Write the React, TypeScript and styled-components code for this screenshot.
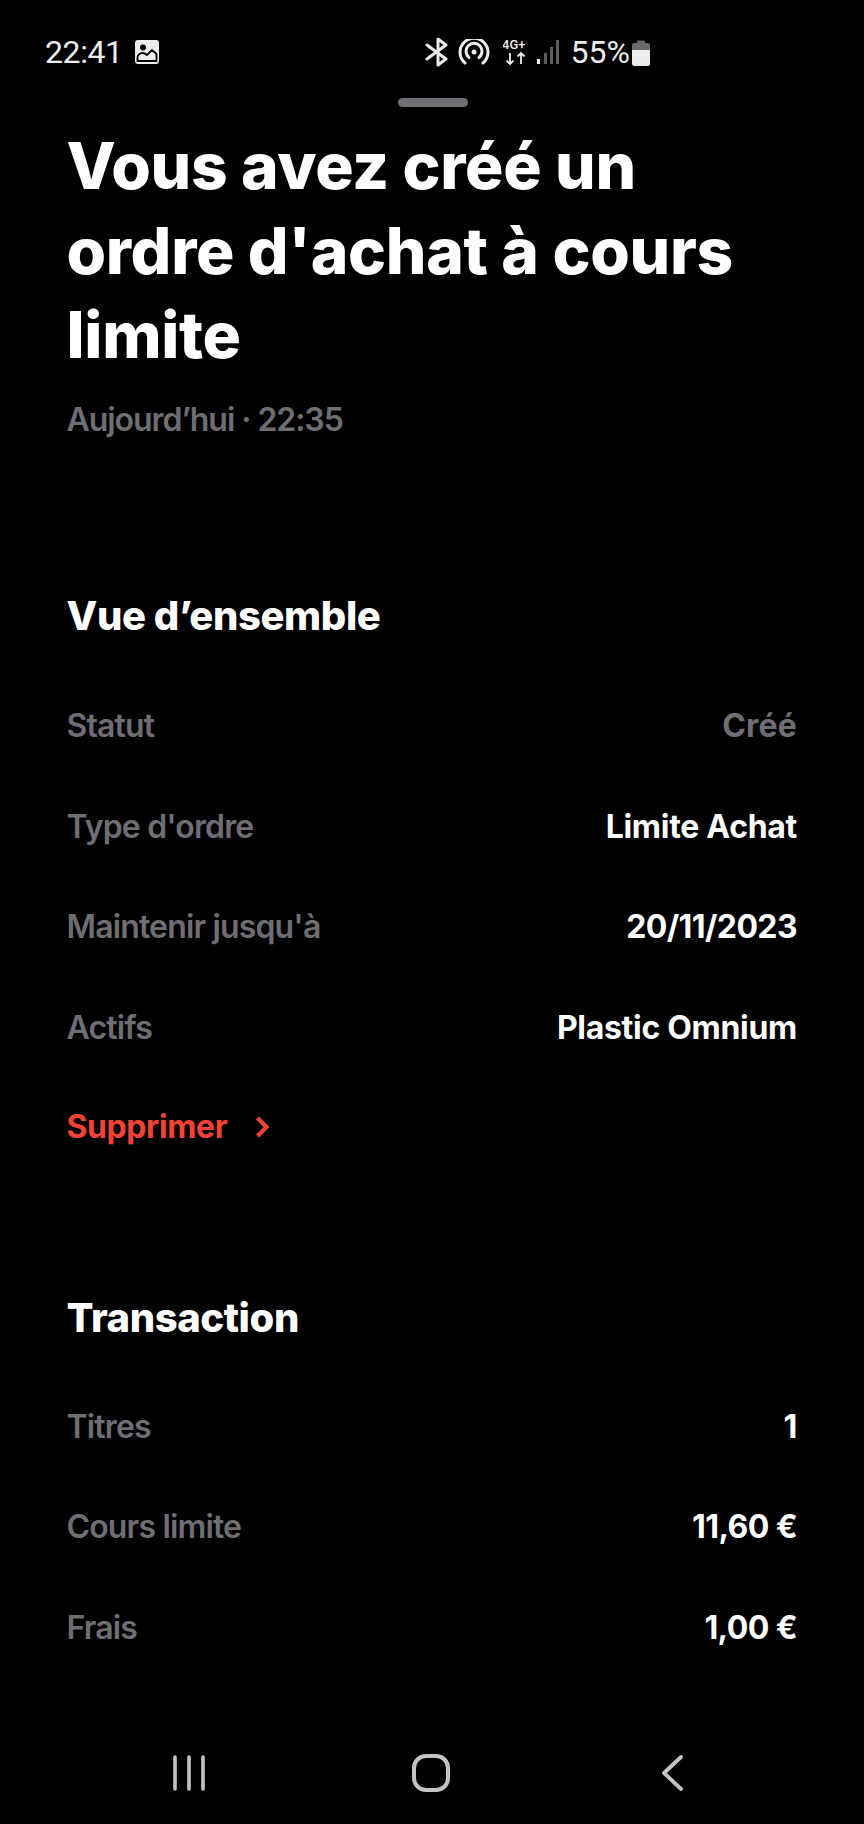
import React from "react";
import styled, { createGlobalStyle } from "styled-components";

const Global = createGlobalStyle`
  html, body { margin: 0; padding: 0; background: #000; }
  body { font-family: Inter, "Liberation Sans", sans-serif; }
`;

const Screen = styled.div`
  width: 864px;
  height: 1824px;
  background: #000;
  color: #fff;
  display: flex;
  flex-direction: column;
  overflow: hidden;
`;

const StatusBar = styled.div`
  height: 96px;
  flex: none;
  display: flex;
  align-items: center;
  justify-content: space-between;
  padding: 8px 220px 0 45px;
  box-sizing: border-box;
  position: relative;
  font-family: Roboto, sans-serif;
  font-size: 32px;
  color: #ececec;
`;

const StatusGroup = styled.div`
  display: flex;
  align-items: center;
  gap: 12px;
`;

const Clock = styled.span`
  letter-spacing: -0.4px;
`;

const StatusRight = styled(StatusGroup)`
  gap: 9px;
  margin-right: -6px;
  margin-left: auto;
`;

const Handle = styled.div`
  position: absolute;
  left: 398px;
  top: 98px;
  width: 70px;
  height: 9px;
  border-radius: 5px;
  background: #6f6f74;
`;

const Content = styled.div`
  flex: 1;
  padding: 28px 66px 0 66.500px;
`;

const Title = styled.h1`
  margin: 0;
  max-width: 700px;
  font-size: 64px;
  line-height: 84.500px;
  font-weight: 800;
  letter-spacing: -0.300px;
`;

const DateLine = styled.div`
  margin-top: 20px;
  font-size: 32px;
  line-height: 44px;
  font-weight: 600;
  color: #6e6e73;
  letter-spacing: -1.050px;
`;

const SectionTitle = styled.h2<{ $top: number }>`
  margin: ${(p) => p.$top}px 0 0;
  font-size: 40px;
  line-height: 50px;
  font-weight: 800;
  letter-spacing: -0.400px;
`;

const Rows = styled.div<{ $top: number }>`
  margin-top: ${(p) => p.$top}px;
  display: flex;
  flex-direction: column;
`;

const Row = styled.div`
  height: 100.600px;
  display: flex;
  align-items: center;
  justify-content: space-between;
  font-size: 32px;
  font-weight: 600;
`;

const Label = styled.span`
  color: #6e6e73;
  letter-spacing: -0.850px;
`;

const Value = styled.span<{ $muted?: boolean; $numeric?: boolean }>`
  color: ${(p) => (p.$muted ? "#6e6e73" : "#fff")};
  font-weight: 700;
  letter-spacing: ${(p) => (p.$numeric ? "-0.600px" : p.$muted ? "0.200px" : "-0.300px")};
  margin-right: 1px;
`;

const DeleteLink = styled.div`
  height: 98px;
  display: flex;
  align-items: center;
  gap: 26px;
  font-size: 32px;
  font-weight: 700;
  color: #f44336;
  letter-spacing: -0.400px;
`;

const NavBar = styled.div`
  height: 100px;
  flex: none;
  display: flex;
  align-items: center;
  justify-content: center;
  color: #c4c4c4;
  padding-bottom: 2px;
  box-sizing: border-box;
`;

const NavSlot = styled.div`
  width: 242px;
  display: flex;
  justify-content: center;
`;

export default function App() {
  return (
    <Screen>
      <Global />
      <StatusBar>
        <StatusGroup>
          <Clock>22:41</Clock>
          <svg width="24" height="24" viewBox="0 0 24 24">
            <rect width="24" height="24" rx="3" fill="#ececec" />
            <circle cx="8" cy="7.500" r="3" fill="#000" />
            <path d="M2.500 21v-3.500c0-2.500 2.500-4.500 5-4.500 2 0 3.500 1 4.500 2l5-5 4.500 4v7z" fill="none" stroke="#000" strokeWidth="1.800" />
          </svg>
        </StatusGroup>
        <StatusRight>
          <svg width="24" height="30" viewBox="0 0 24 30" fill="none" stroke="#ececec" strokeWidth="3" strokeLinecap="round" strokeLinejoin="round">
            <path d="M2 8l19 14-8 6V2l8 6L2 22" />
          </svg>
          <svg width="32" height="26" viewBox="0 0 32 26" fill="none" stroke="#ececec" strokeWidth="3" strokeLinecap="round" style={{ marginRight: 4 }}>
            <path d="M7 24A14 14 0 1 1 25 24" />
            <path d="M11 18.500A8 8 0 1 1 21 18.500" />
            <circle cx="16" cy="13" r="2.500" fill="#ececec" stroke="none" />
          </svg>
          <svg width="26" height="28" viewBox="0 0 26 28" style={{ marginRight: -2 }}>
            <text x="-1" y="11" fontSize="13" fontFamily="Roboto, sans-serif" fontWeight="500" fill="#ececec">4G+</text>
            <path d="M7 15v11M3.500 22.500L7 26l3.500-3.500M18 26V15M14.500 18.500L18 15l3.500 3.500" fill="none" stroke="#ececec" strokeWidth="1.800" />
          </svg>
          <svg width="24" height="26" viewBox="0 0 24 26" style={{ marginRight: 2 }}>
            <rect x="1" y="20" width="3" height="5" fill="#ececec" />
            <rect x="8" y="14" width="3" height="11" fill="#5e5e5e" />
            <rect x="14" y="8" width="3" height="17" fill="#5e5e5e" />
            <rect x="20" y="1" width="3" height="24" fill="#5e5e5e" />
          </svg>
          <span>55%</span>
          <svg width="18" height="27" viewBox="0 0 18 27" style={{ marginLeft: -7 }}>
            <path d="M5 2.500a1 1 0 0 1 1-1h6a1 1 0 0 1 1 1V4h2.500A2.500 2.500 0 0 1 18 6.500V11H0V6.500A2.500 2.500 0 0 1 2.500 4H5z" fill="#6a6a6a" />
            <path d="M0 11h18v13.500a2.500 2.500 0 0 1-2.500 2.500h-13A2.500 2.500 0 0 1 0 24.500z" fill="#ececec" />
          </svg>
        </StatusRight>
        <Handle />
      </StatusBar>
      <Content>
        <Title>Vous avez créé un ordre d'achat à cours limite</Title>
        <DateLine>Aujourd’hui · 22:35</DateLine>
        <SectionTitle $top={149}>Vue d’ensemble</SectionTitle>
        <Rows $top={35}>
          <Row><Label>Statut</Label><Value $muted>Créé</Value></Row>
          <Row><Label>Type d'ordre</Label><Value>Limite Achat</Value></Row>
          <Row><Label>Maintenir jusqu'à</Label><Value $numeric>20/11/2023</Value></Row>
          <Row><Label>Actifs</Label><Value>Plastic Omnium</Value></Row>
          <DeleteLink>
            Supprimer
            <svg width="16" height="22" viewBox="0 0 16 22" fill="none" stroke="#f44336" strokeWidth="4.200" style={{ marginLeft: 2 }}>
              <path d="M2.500 2l9 9-9 9" />
            </svg>
          </DeleteLink>
        </Rows>
        <SectionTitle $top={117}>Transaction</SectionTitle>
        <Rows $top={33}>
          <Row><Label>Titres</Label><Value>1</Value></Row>
          <Row><Label>Cours limite</Label><Value $numeric>11,60 €</Value></Row>
          <Row><Label>Frais</Label><Value $numeric>1,00 €</Value></Row>
        </Rows>
      </Content>
      <NavBar>
        <NavSlot>
          <svg width="36" height="36" viewBox="0 0 36 36" fill="none" stroke="currentColor" strokeWidth="3.600" strokeLinecap="round" style={{ marginLeft: -2 }}>
            <path d="M4 2v32M18 2v32M32 2v32" />
          </svg>
        </NavSlot>
        <NavSlot>
          <svg width="38" height="38" viewBox="0 0 38 38" fill="none" stroke="currentColor" strokeWidth="4" style={{ marginLeft: -2 }}>
            <rect x="2" y="2" width="34" height="34" rx="12" />
          </svg>
        </NavSlot>
        <NavSlot>
          <svg width="24" height="36" viewBox="0 0 24 36" fill="none" stroke="currentColor" strokeWidth="3.800" strokeLinecap="round" strokeLinejoin="round" style={{ marginLeft: -2 }}>
            <path d="M20 2L3 18l17 16" />
          </svg>
        </NavSlot>
      </NavBar>
    </Screen>
  );
}
